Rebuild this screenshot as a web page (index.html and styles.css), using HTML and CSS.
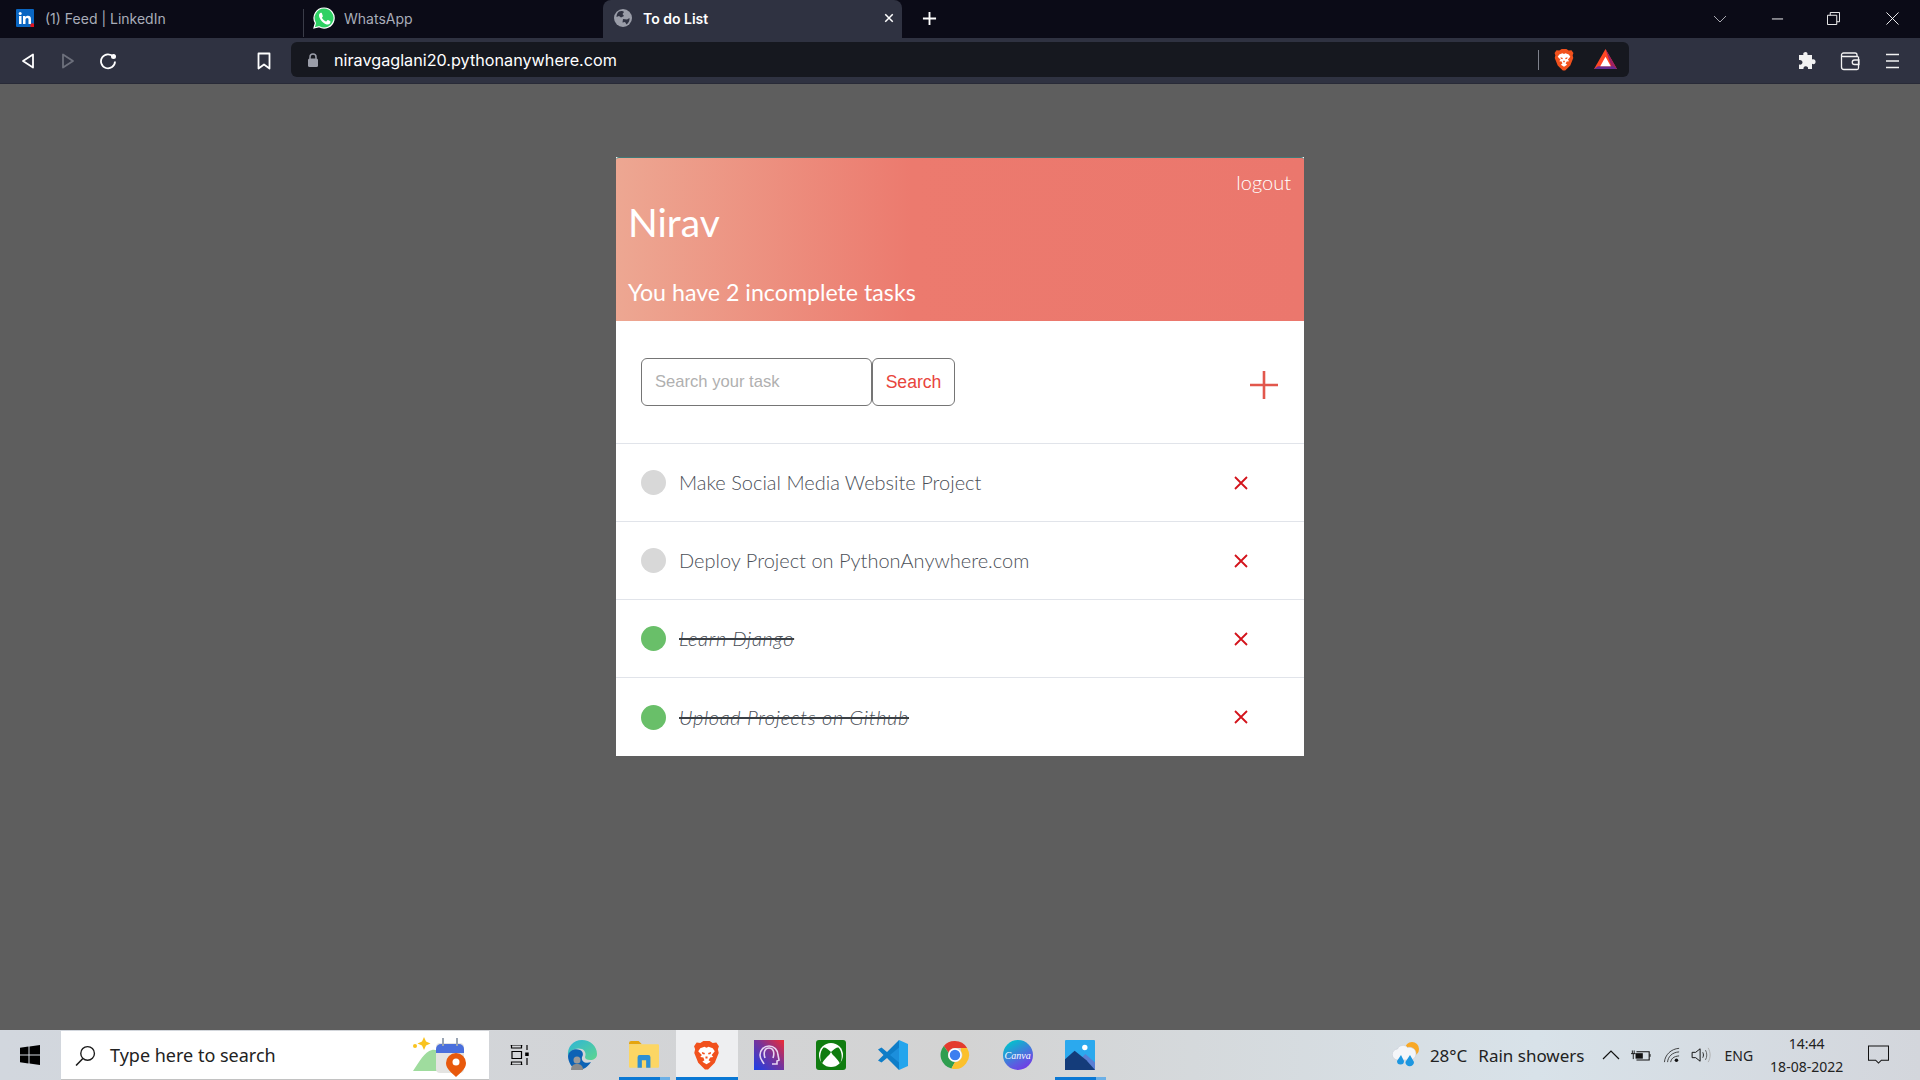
FILE: index.html
```html
<!DOCTYPE html>
<html lang="en">
  <head>
    <meta charset="utf-8" />
    <title>To do List</title>
    <link rel="stylesheet" href="styles.css">
  </head>
  <body>
    <svg class="defs" width="0" height="0">
      <symbol id="brave" viewBox="0 0 24 28">
        <path fill="#f1511d" d="M6 2 9 0h6l3 2 3.500-.5L24 5l-1 3 .8 3.500L20 21l-6.500 6.500h-3L4 21 .2 11.500 1 8 0 5l2.500-3.500z"/>
        <path fill="#fff" d="M6 7l4-1.500 2 1 2-1L18 7l2 3-3 3.500 1.500 2-3 .5-1.500 2.500 2 1.500-4 2.500-4-2.500 2-1.500L9 16l-3-.5 1.500-2L4 10z"/>
        <path fill="#f1511d" d="M7.500 10.500l3 1-.5 1.500-2-.5zM16.500 10.500l-3 1 .5 1.500 2-.5zM11 15h2v2h-2z"/>
      </symbol>
    </svg>

    <div class="tabstrip">
      <div class="tab">
        <svg class="favicon" viewBox="0 0 18 18">
          <rect width="18" height="18" rx="1" fill="#0a66c2"/>
          <rect x="3" y="7" width="2.500" height="8" fill="#fff"/>
          <circle cx="4.200" cy="4.500" r="1.500" fill="#fff"/>
          <path fill="#fff" d="M7 7h2.400v1.200C10 7.300 11 6.800 12 6.800c2.300 0 3 1.400 3 3.600V15h-2.500v-4.200c0-1-.3-1.800-1.300-1.800s-1.700.8-1.700 1.900V15H7z"/>
          <circle cx="16.500" cy="16.500" r="2.200" fill="#e0141e"/>
        </svg>
        <span class="tab-title">(1) Feed | LinkedIn</span>
      </div>
      <div class="tab tab-sep">
        <svg class="favicon favicon-wa" viewBox="0 0 22 22">
          <path fill="#2ed163" d="M11 1a10 10 0 0 0-8.600 15L1 21l5.200-1.300A10 10 0 1 0 11 1z" stroke="#fff" stroke-width="1.200"/>
          <path fill="#fff" d="M7.800 5.800c-.5 0-1.800 1-1.800 2.800 0 1.700 1.300 3.500 1.500 3.800.200.300 2.500 4 6.200 5 2.600.600 3.400-.800 3.600-1.600.200-.800.200-1.500.100-1.600l-2.300-1.200c-.300-.100-.500-.100-.700.200l-.9 1.100c-.200.200-.400.200-.700.100-1.500-.600-3-2-3.800-3.400-.100-.300 0-.500.100-.600l.7-.9c.1-.2.100-.4 0-.6L8.900 6.300c-.200-.500-.600-.500-1.100-.500z"/>
        </svg>
        <span class="tab-title">WhatsApp</span>
      </div>
      <div class="tab tab-active">
        <svg class="favicon" viewBox="0 0 18 18">
          <circle cx="9" cy="9" r="9" fill="#9a9da8"/>
          <path fill="#2f3241" d="M5 2.500c2-1 4-.5 5 .5L8.500 5 10 7 7 8.500 5 7 2.500 8c0-2.500 1-4.500 2.500-5.500zM9 10l4 .5 2.500-1.500c.3 3-1 5-3 6.500L11 13l-2.500.5z"/>
        </svg>
        <span class="tab-title">To do List</span>
        <svg class="tab-close" viewBox="0 0 12 12"><path d="M1.500 1.500l9 9M10.500 1.500l-9 9" stroke="#fff" stroke-width="1.800"/></svg>
      </div>
      <svg class="newtab" viewBox="0 0 16 16"><path d="M8 1v14M1 8h14" stroke="#fff" stroke-width="2"/></svg>
      <div class="win-controls">
        <svg class="win-chevron" viewBox="0 0 14 8"><path d="M1 1l6 6 6-6" fill="none" stroke="#a8a8b0"/></svg>
        <svg class="win-btn win-min" viewBox="0 0 14 14"><path d="M1 7.500h12" stroke="#fff" stroke-width="1"/></svg>
        <svg class="win-btn win-max" viewBox="0 0 14 14"><path d="M.5 3.500h10v10H.5zM3.500 3.500v-3h10v10h-3" fill="none" stroke="#fff"/></svg>
        <svg class="win-btn win-last" viewBox="0 0 14 14"><path d="M.5.500l13 13M13.500.500l-13 13" stroke="#fff"/></svg>
      </div>
    </div>

    <div class="toolbar">
      <div class="nav-btns">
        <svg viewBox="0 0 14 16"><path d="M12 1.500v13L2 8z" fill="none" stroke="#fff" stroke-width="1.800" stroke-linejoin="round"/></svg>
        <svg viewBox="0 0 14 16"><path d="M2 1.500v13L12 8z" fill="none" stroke="#6d707c" stroke-width="1.800" stroke-linejoin="round"/></svg>
        <svg viewBox="0 0 18 18"><path d="M14.500 5A7 7 0 1 0 16 9.500" fill="none" stroke="#fff" stroke-width="1.800"/><circle cx="14.500" cy="4.500" r="2.500" fill="#fff"/></svg>
      </div>
      <svg class="bookmark" viewBox="0 0 14 18"><path d="M1.500 1.500h11v15L7 12.500l-5.500 4z" fill="none" stroke="#fff" stroke-width="1.800" stroke-linejoin="round"/></svg>
      <div class="urlbar">
        <svg class="lock" viewBox="0 0 12 14"><path d="M3 6V4a3 3 0 0 1 6 0v2" fill="none" stroke="#9a9da8" stroke-width="1.500"/><rect y="5.500" x="1" width="10" height="8.500" rx="1.500" fill="#9a9da8"/></svg>
        <span class="url">niravgaglani20.pythonanywhere.com</span>
        <span class="url-sep"></span>
        <svg class="url-brave"><use href="#brave"/></svg>
        <svg class="url-bat" viewBox="0 0 24 22">
          <path fill="#ff4724" d="M12 0 0 21h24z"/>
          <path fill="#9e1f63" d="M12 0l12 21h-5z"/>
          <path fill="#662d91" d="M0 21l4-3h16l4 3z"/>
          <path fill="#fff" d="M12 8l-5.500 10h11z"/>
        </svg>
      </div>
      <div class="toolbar-right">
        <svg viewBox="0 0 20 20"><path fill="#f2f2f2" d="M7 1.500c2-1.500 4 0 3.500 2.500H15v4.500c2.500-.8 4 1 3.500 3-.5 1.800-2 2-3.500 1.300V18h-4c.5-2-1-3-2.500-2.800C7 15.400 6.200 16.500 6.500 18H2v-4.500C4 14 5.500 13 5.500 11.300S4 8.500 2 9V4h4.500C6 3 6.200 2.200 7 1.500z"/></svg>
        <svg viewBox="0 0 20 20"><path d="M18 5.500H3A1.500 1.500 0 0 1 1.500 4v12A2.500 2.500 0 0 0 4 18.500h13a1.500 1.500 0 0 0 1.500-1.500V5.500M1.500 4A2 2 0 0 1 3.500 2H15a2 2 0 0 1 2 2v1.500M19 9h-4.500a2 2 0 0 0 0 4.500H19z" fill="none" stroke="#f2f2f2" stroke-width="1.300"/></svg>
        <svg viewBox="0 0 20 20"><path d="M3 3.500h13M3 10h13M3 16.500h13" stroke="#f2f2f2" stroke-width="1.600"/></svg>
      </div>
    </div>

    <main class="page">
      <section class="todo-card">
        <header class="todo-header">
          <a class="logout">logout</a>
          <h1 class="todo-name">Nirav</h1>
          <h3 class="todo-count">You have 2 incomplete tasks</h3>
        </header>

        <div class="search-row">
          <form class="search-form">
            <input class="search-input" type="text" placeholder="Search your task">
            <button class="search-btn" type="button">Search</button>
          </form>
          <svg class="add-task" viewBox="0 0 28 28"><path d="M14 0v28M0 14h28" stroke="#e2574c" stroke-width="2.600"/></svg>
        </div>

        <div class="task">
          <span class="task-dot"></span>
          <span class="task-title">Make Social Media Website Project</span>
          <svg class="task-del" viewBox="0 0 14 14"><path d="M1 1l12 12M13 1L1 13" stroke="#d3131b" stroke-width="1.800"/></svg>
        </div>
        <div class="task">
          <span class="task-dot"></span>
          <span class="task-title">Deploy Project on PythonAnywhere.com</span>
          <svg class="task-del" viewBox="0 0 14 14"><path d="M1 1l12 12M13 1L1 13" stroke="#d3131b" stroke-width="1.800"/></svg>
        </div>
        <div class="task">
          <span class="task-dot done"></span>
          <span class="task-title finished">Learn Django</span>
          <svg class="task-del" viewBox="0 0 14 14"><path d="M1 1l12 12M13 1L1 13" stroke="#d3131b" stroke-width="1.800"/></svg>
        </div>
        <div class="task">
          <span class="task-dot done"></span>
          <span class="task-title finished">Upload Projects on Github</span>
          <svg class="task-del" viewBox="0 0 14 14"><path d="M1 1l12 12M13 1L1 13" stroke="#d3131b" stroke-width="1.800"/></svg>
        </div>
      </section>
    </main>

    <footer class="taskbar">
      <div class="start">
        <svg viewBox="0 0 20 20"><path fill="#000" d="M0 2.800 8.500 1.600v8H0zM9.500 1.500 20 0v9.600H9.500zM0 10.500h8.500v8L0 17.200zM9.500 10.500H20V20L9.500 18.600z"/></svg>
      </div>
      <div class="tb-search">
        <svg class="tb-search-icon" viewBox="0 0 20 20"><circle cx="12" cy="8" r="6.500" fill="none" stroke="#1a1a1a" stroke-width="1.300"/><path d="M7.500 12.800 1 19.500" stroke="#1a1a1a" stroke-width="1.500"/></svg>
        <span class="tb-search-text">Type here to search</span>
        <svg class="tb-search-art" viewBox="0 0 54 42">
          <path fill="#f9c31f" d="M12 2l2 4.500 4.500 2-4.500 2L12 15l-2-4.500-4.500-2 4.500-2z"/>
          <circle cx="3" cy="11" r="2" fill="#f9c31f"/>
          <path fill="#9fdc9e" d="M1 36C8 26 12 17 20 15c6-1 10 4 12 10v11z"/>
          <rect x="24" y="8" width="28" height="30" rx="4" fill="#e4e4e2"/>
          <path fill="#4a6fdc" d="M24 18v-4a5 5 0 0 1 5-5h18a5 5 0 0 1 5 5v4z"/>
          <path d="M31 3v8M45 3v8" stroke="#9aa5b4" stroke-width="2"/>
          <path fill="#e8590c" d="M44 18a10 10 0 0 0-10 10c0 6 6 10 10 14 4-4 10-8 10-14a10 10 0 0 0-10-10z"/>
          <circle cx="44" cy="27" r="3.500" fill="#fff"/>
        </svg>
      </div>

      <div class="tb-apps">
        <div class="tb-app">
          <svg class="ic-task" viewBox="0 0 20 20"><path d="M.5 0h12M1.500 0v3h10V0M2 6.500h9.500v7H2zM.5 20h12M1.500 20v-3h10v3M17 0v5M17 13v7" fill="none" stroke="#000" stroke-width="1.200"/><rect x="15.200" y="7.500" width="3.500" height="3.500" fill="#000"/></svg>
        </div>
        <div class="tb-app">
          <svg class="ic-30" viewBox="0 0 30 30">
            <defs><linearGradient id="edgeTop" x1="0" y1="0" x2="1" y2="1"><stop offset="0" stop-color="#2db5d8"/><stop offset="1" stop-color="#5fd58e"/></linearGradient></defs>
            <path fill="url(#edgeTop)" d="M15 0c8 0 15 6 15 14 0 4-3 6-7 6-3 0-5-1-5-3 1-2 1-6-3-8C9 7 3 10 1 16 0 7 6 0 15 0z"/>
            <path fill="#0c62b5" d="M1 16c1-6 7-8 12-6 4 2 3 6 2 7-1 5 4 7 9 5-3 5-8 8-13 8-6-1-10-8-10-14z"/>
            <circle cx="10" cy="20" r="3.500" fill="#9a9a9a"/>
            <path fill="#8a8a8a" d="M4 30c0-5 3-6 6-6s6 1 6 6z"/>
          </svg>
        </div>
        <div class="tb-app running">
          <svg class="ic-30" viewBox="0 0 28 28">
            <path fill="#e5a50f" d="M0 3a2 2 0 0 1 2-2h7l3 3h-12z"/>
            <rect y="4" width="28" height="22" rx="1" fill="#fcd664"/>
            <path fill="#2d8fd5" d="M8 26V16a2 2 0 0 1 2-2h8a2 2 0 0 1 2 2v10h-4v-7h-4v7z"/>
          </svg>
        </div>
        <div class="tb-app current">
          <svg class="ic-brave"><use href="#brave"/></svg>
        </div>
        <div class="tb-app">
          <svg class="ic-30" viewBox="0 0 30 30">
            <defs><linearGradient id="podGrad" x1="0" y1="1" x2="1" y2="0"><stop offset="0" stop-color="#1a3fe8"/><stop offset=".55" stop-color="#7a3398"/><stop offset="1" stop-color="#ef2b33"/></linearGradient></defs>
            <rect width="30" height="30" fill="url(#podGrad)"/>
            <path d="M10 24c-1-3-4-4-4-9a9 9 0 0 1 18 0l1 5-2 1v3h-5M11 18c-2-6 0-10 4-10s6 4 4 10" fill="none" stroke="#e6d5f2" stroke-width="1.600"/>
          </svg>
        </div>
        <div class="tb-app">
          <svg class="ic-30" viewBox="0 0 30 30">
            <rect width="30" height="30" rx="3" fill="#107c10"/>
            <circle cx="15" cy="15" r="12" fill="#fff"/>
            <path fill="#107c10" d="M15 12C12 9 9 7 7.500 7.500 3.500 12 3.500 19 6 24c1-3 5-7 7.500-9.500zM15 12c3-3 6-5 7.500-4.500 4 4.500 4 11.500 1.500 16.500-1-3-5-7-7.500-9.500z"/>
          </svg>
        </div>
        <div class="tb-app">
          <svg class="ic-30" viewBox="0 0 30 30">
            <path fill="#0e7dc8" d="M21 0 9 12 3.500 7.500 0 9.500l5.500 5.500L0 20.500l3.500 2L9 18l12 12z"/>
            <path fill="#24a5ed" d="M21 0l9 4v22l-9 4z"/>
            <path fill="#1c8fdc" d="M21 7.500 12 15l9 7.500z"/>
          </svg>
        </div>
        <div class="tb-app">
          <svg class="ic-30" viewBox="0 0 30 30">
            <path fill="#e33b2e" d="M15 1a14 14 0 0 1 12.100 7H15a7 7 0 0 0-6.600 4.600L3.800 5.900A14 14 0 0 1 15 1z"/>
            <path fill="#2f9e4f" d="M3.800 5.900 8.400 12.600A7 7 0 0 0 15 22l-3.600 6.500A14 14 0 0 1 3.800 5.900z"/>
            <path fill="#fbc02d" d="M27.100 8a14 14 0 0 1-15.700 20.500L15 22a7 7 0 0 0 6-11l-.3-3z"/>
            <circle cx="15" cy="15" r="6" fill="#3d7ff0" stroke="#fff" stroke-width="1.500"/>
          </svg>
        </div>
        <div class="tb-app">
          <div class="canva">Canva</div>
        </div>
        <div class="tb-app running">
          <svg class="ic-30" viewBox="0 0 28 28">
            <rect width="28" height="28" rx="1" fill="#2ba9ee"/>
            <circle cx="18.500" cy="7" r="2.500" fill="#fff"/>
            <path fill="#5a7fd4" d="M12 20l7-7 9 8v7H14z"/>
            <path fill="#143c7a" d="M0 18l9-8 11 9 8 9H0z"/>
          </svg>
        </div>
      </div>

      <div class="tray">
        <svg class="tray-weather" viewBox="0 0 28 28">
          <circle cx="20" cy="8" r="7" fill="#f9a825"/>
          <path fill="#f4f6f9" stroke="#c6ccd6" stroke-width=".6" d="M6 19a5.500 5.500 0 0 1-.5-11C7 4 13 3 15.500 6.500 19.500 5.500 24 8 24 12.500c0 4-3 6.500-6 6.500z"/>
          <path fill="#1d97e0" d="M9 14l3 6a3.500 3.500 0 1 1-7 0zM18 14l4 7a4.300 4.300 0 1 1-8.600 0z"/>
        </svg>
        <span class="tray-text tray-temp">28°C</span>
        <span class="tray-text">Rain showers</span>
        <svg class="tray-chevron" viewBox="0 0 18 10"><path d="M1 9l8-8 8 8" fill="none" stroke="#111" stroke-width="1.200"/></svg>
        <svg class="tray-icon tray-battery" viewBox="0 0 22 14"><path d="M6 3.500h14v9H6" fill="none" stroke="#111" stroke-width="1.200"/><rect x="5" y="5" width="8" height="6" fill="#111"/><path d="M21 6v3" stroke="#111"/><path d="M0 5.500h5M1.500 2v3.500M3.500 2v3.500M2.500 5.500v6" stroke="#111"/></svg>
        <svg class="tray-icon tray-wifi" viewBox="0 0 18 18"><path d="M.5 17C1 9 8 2 17 1.500M4 17c.5-6 5-11 13-11.500M7.500 17c.5-3.500 3-6.500 9.500-7" fill="none" stroke="#333" stroke-width="1"/><circle cx="14" cy="15" r="2" fill="#111"/></svg>
        <svg class="tray-icon" viewBox="0 0 22 18"><path d="M1 6h4l5-4v14l-5-4H1z" fill="none" stroke="#111" stroke-width="1.100"/><path d="M13 6c1 2 1 4 0 6" fill="none" stroke="#111"/><path d="M16 3.500c2 3 2 8 0 11" fill="none" stroke="#555"/><path d="M19 1c3 5 3 11 0 16" fill="none" stroke="#aaa"/></svg>
        <span class="tray-text tray-lang">ENG</span>
        <div class="clock">
          <span>14:44</span>
          <span>18-08-2022</span>
        </div>
        <svg class="tray-notify" viewBox="0 0 22 20"><path d="M.5.500h21v15h-7.500l-3 3-3-3H.5z" fill="none" stroke="#111" stroke-width="1.100"/></svg>
      </div>
    </footer>
  </body>
</html>
```

FILE: styles.css
```css
* {
  box-sizing: border-box;
}
html, body {
  height: 100%;
}
body {
  margin: 0;
  display: flex;
  flex-flow: column;
  height: 1080px;
  overflow: hidden;
  background: #5e5e5e;
  font-family: "Noto Sans", sans-serif;
}
svg {
  display: block;
  flex: none;
}
.defs {
  position: absolute;
}

/* browser chrome */
.tabstrip {
  display: flex;
  align-items: stretch;
  height: 38px;
  background: #0b0b17;
  font-family: Inter, sans-serif;
  font-size: 14px;
}
.tab {
  display: flex;
  align-items: center;
  width: 303px;
  padding-left: 16px;
  padding-bottom: 2px;
  color: #a9adb9;
}
.tab-sep {
  position: relative;
  width: 300px;
  padding-left: 10px;
}
.tab-sep::before {
  content: "";
  position: absolute;
  left: 0;
  top: 9px;
  height: 28px;
  width: 1px;
  background: #3a3c48;
}
.tab-active {
  width: 299px;
  padding-left: 11px;
  padding-right: 8px;
  background: #2f3241;
  border-radius: 8px 8px 0 0;
  color: #fff;
  font-weight: 600;
}
.favicon {
  width: 18px;
  height: 18px;
}
.favicon-wa {
  width: 22px;
  height: 22px;
}
.tab-title {
  margin-left: 11px;
}
.tab-sep .tab-title {
  margin-left: 9px;
}
.tab-active .tab-title {
  margin-left: 11px;
  flex: 1;
}
.tab-close {
  width: 10px;
  height: 10px;
}
.newtab {
  width: 15px;
  height: 15px;
  margin: 11px 0 0 20px;
}
.win-controls {
  display: flex;
  align-items: center;
  margin-left: auto;
  padding-bottom: 1px;
}
.win-chevron {
  width: 14px;
  height: 8px;
  margin-right: 44px;
}
.win-btn {
  width: 13px;
  height: 13px;
}
.win-min {
  margin-right: 43px;
}
.win-max {
  margin-right: 46px;
}
.win-last {
  margin-right: 21px;
}
.toolbar {
  display: flex;
  align-items: center;
  height: 46px;
  background: #2f3241;
  border-bottom: 1px solid #282a37;
}
.nav-btns {
  display: flex;
  align-items: center;
  gap: 26px;
  width: 257px;
  padding-left: 21px;
}
.nav-btns svg {
  width: 14px;
  height: 16px;
}
.nav-btns svg:last-child {
  width: 18px;
  height: 18px;
  margin-left: -2px;
}
.bookmark {
  width: 14px;
  height: 18px;
  margin-right: 20px;
}
.urlbar {
  display: flex;
  align-items: center;
  width: 1338px;
  height: 35px;
  padding-left: 16px;
  background: #16181f;
  border-radius: 6px;
  margin-top: -2px;
}
.lock {
  width: 12px;
  height: 14px;
}
.url {
  margin-left: 15px;
  flex: 1;
  font-family: Inter, sans-serif;
  font-size: 16.200px;
  color: #fff;
}
.url-sep {
  width: 1px;
  height: 20px;
  background: #7f828c;
  margin-right: 15px;
}
.url-brave {
  width: 20px;
  height: 22px;
}
.url-bat {
  width: 23px;
  height: 21px;
  margin: 0 12px 0 20px;
}
.toolbar-right {
  display: flex;
  align-items: center;
  gap: 23px;
  margin-left: 168px;
}
.toolbar-right svg {
  width: 20px;
  height: 20px;
}

/* todo app */
.page {
  flex: 1;
  display: flex;
  justify-content: center;
  align-items: flex-start;
  padding-top: 73px;
}
.todo-card {
  width: 688px;
  background: #fff;
}
.todo-header {
  position: relative;
  height: 164px;
  padding: 0 12px;
  background: linear-gradient(to right, #eda792 0%, #ec7a6e 43%, #eb776d 100%);
  border-top: 1px solid #3f7a78;
  border-radius: 3px 3px 0 0;
  color: #fff;
  font-family: Lato, sans-serif;
}
.logout {
  position: absolute;
  right: 13px;
  top: 12px;
  font-size: 20px;
  font-weight: 300;
}
.todo-name {
  margin: 0;
  padding-top: 38px;
  font-size: 39px;
  line-height: 52px;
  font-weight: 400;
}
.todo-count {
  margin: 29px 0 0;
  font-size: 23.200px;
  line-height: 30px;
  font-weight: 400;
}
.search-row {
  display: flex;
  justify-content: space-between;
  align-items: flex-start;
  height: 123px;
  padding: 37px 26px 0 25px;
  border-bottom: 1px solid #e1e4ea;
}
.search-form {
  display: flex;
}
.search-input {
  width: 231px;
  height: 48px;
  padding: 0 13px;
  border: 1px solid #757575;
  border-radius: 6px;
  font-family: "Liberation Sans", sans-serif;
  font-size: 16.600px;
  outline: none;
}
.search-input::placeholder {
  color: #b0b0b0;
}
.search-btn {
  width: 83px;
  height: 48px;
  background: #fff;
  border: 1px solid #757575;
  border-radius: 6px;
  color: #e8453c;
  font-family: "Liberation Sans", sans-serif;
  font-size: 17.600px;
}
.add-task {
  width: 28px;
  height: 28px;
  margin-top: 13px;
}
.task {
  display: flex;
  align-items: center;
  height: 78px;
  padding: 0 56px 0 25px;
  border-bottom: 1px solid #e1e4ea;
}
.task:last-child {
  border-bottom: 0;
}
.task-dot {
  width: 25px;
  height: 25px;
  border-radius: 50%;
  background: #d8d8d8;
  margin-right: 13px;
}
.task-dot.done {
  background: #69bf69;
}
.task-title {
  flex: 1;
  padding-bottom: 1px;
  font-family: Lato, sans-serif;
  font-weight: 300;
  font-size: 20px;
  color: #4b5058;
}
.task-title.finished {
  flex: none;
  font-style: italic;
  letter-spacing: 0.65px;
  text-decoration: line-through;
  text-decoration-color: #3a3f44;
  text-decoration-thickness: 1.500px;
}
.task:has(.finished) .task-del {
  margin-left: auto;
}
.task-del {
  width: 14px;
  height: 14px;
}

/* taskbar */
.taskbar {
  display: flex;
  align-items: stretch;
  height: 50px;
  background: linear-gradient(to right, #d2d7de 0%, #d3d3d3 50%, #d8e2e9 80%, #d3d6dc 100%);
}
.start {
  display: flex;
  align-items: center;
  width: 61px;
  padding-left: 20px;
}
.start svg {
  width: 20px;
  height: 20px;
}
.tb-search {
  display: flex;
  align-items: center;
  width: 428px;
  margin-top: 1px;
  padding: 0 23px 0 14px;
  background: #fff;
  border-bottom: 1px solid #c2c2c2;
}
.tb-search-icon {
  width: 21px;
  height: 21px;
}
.tb-search-text {
  flex: 1;
  margin-left: 14px;
  font-size: 18px;
  color: #222;
}
.tb-search-art {
  width: 54px;
  height: 42px;
  margin-top: 2px;
}
.tb-apps {
  display: flex;
}
.tb-app {
  position: relative;
  display: flex;
  justify-content: center;
  align-items: center;
  width: 62.200px;
}
/* open-app underline, with the lighter stub at its right end */
.tb-app.running::after {
  content: "";
  position: absolute;
  left: 6px;
  bottom: 0;
  width: 51px;
  height: 3px;
  background: linear-gradient(to right, #0a78d4 80%, #6cb0e6 80%);
}
.tb-app.current {
  background: #eeeff1;
  border-bottom: 3px solid #0a78d4;
  padding-top: 3px;
}
.ic-task {
  width: 20px;
  height: 20px;
}
.ic-30 {
  width: 30px;
  height: 30px;
}
.ic-brave {
  width: 25px;
  height: 29px;
}
.canva {
  display: flex;
  justify-content: center;
  align-items: center;
  width: 30px;
  height: 30px;
  border-radius: 50%;
  background: linear-gradient(150deg, #00c4cc 10%, #5a5fe0 65%, #7d2ae8 100%);
  color: #fff;
  font-family: "Liberation Serif", serif;
  font-style: italic;
  font-size: 10px;
}
.tray {
  display: flex;
  align-items: center;
  margin-left: 281px;
  color: #111;
}
.tray-weather {
  width: 28px;
  height: 28px;
  margin-right: 10px;
}
.tray-text {
  font-size: 17px;
  color: #222;
}
.tray-temp {
  margin-right: 11px;
}
.tray-chevron {
  width: 18px;
  height: 10px;
  margin: 0 11px 0 18px;
}
.tray-icon {
  width: 20px;
  height: 16px;
  margin-right: 9px;
}
.tray-battery {
  margin-right: 11px;
}
.tray-lang {
  font-size: 14px;
  margin-left: 4px;
}
.clock {
  display: flex;
  flex-flow: column;
  align-items: center;
  margin-left: 17px;
  font-size: 14px;
  line-height: 23px;
  color: #222;
}
.tray-notify {
  width: 21px;
  height: 20px;
  margin-left: 25px;
}
```
